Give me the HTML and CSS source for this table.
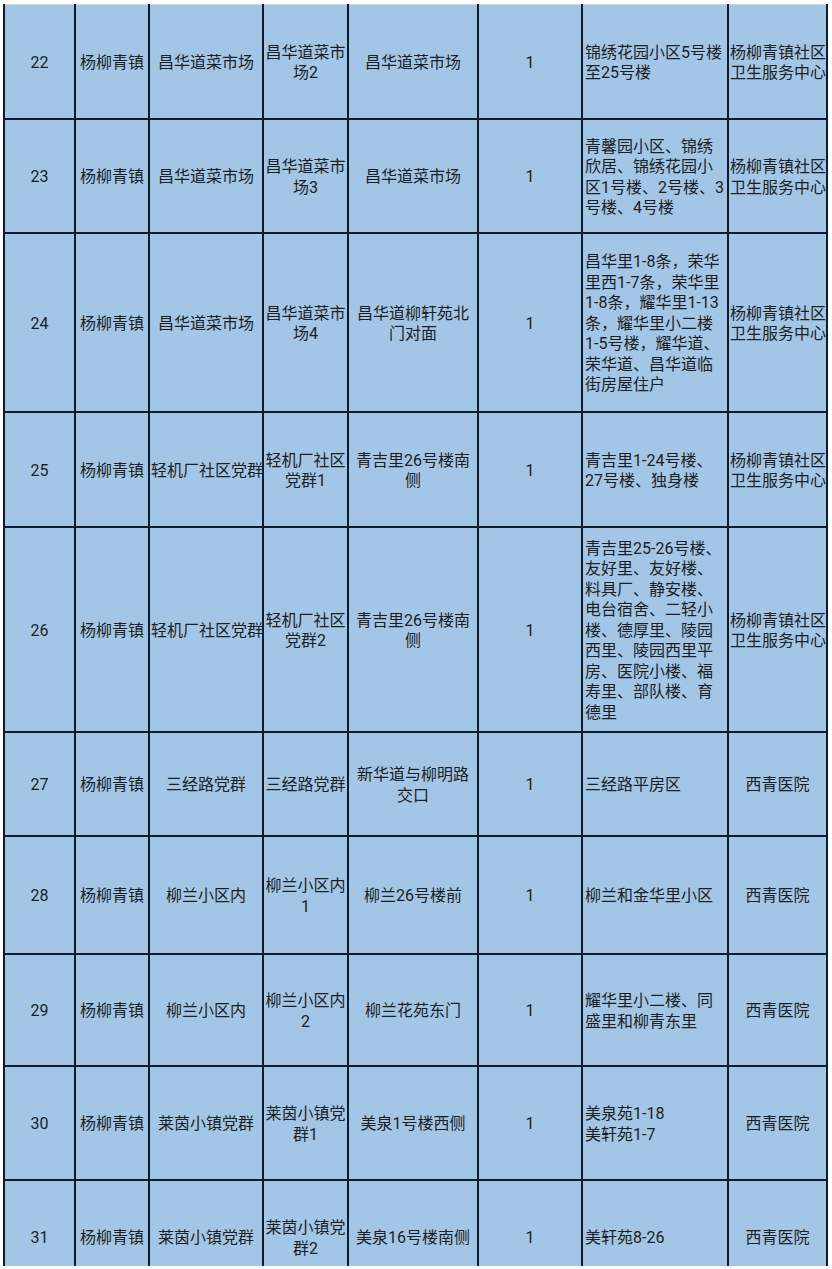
FILE: index.html
```html
<!DOCTYPE html>
<html lang="zh-CN">
<head>
<meta charset="utf-8">
<title>核酸采样点</title>
<link rel="stylesheet" href="styles.css">
</head>
<body>
<div class="sheet">
<table class="grid">
<colgroup>
<col class="c1"><col class="c2"><col class="c3"><col class="c4"><col class="c5"><col class="c6"><col class="c7"><col class="c8">
</colgroup>
<tbody>
<tr class="h114 first">
<td>22</td><td>杨柳青镇</td><td>昌华道菜市场</td><td>昌华道菜市<br>场2</td><td>昌华道菜市场</td><td>1</td><td class="addr">锦绣花园小区5号楼<br>至25号楼</td><td>杨柳青镇社区<br>卫生服务中心</td>
</tr>
<tr class="h114">
<td>23</td><td>杨柳青镇</td><td>昌华道菜市场</td><td>昌华道菜市<br>场3</td><td>昌华道菜市场</td><td>1</td><td class="addr">青馨园小区、锦绣<br>欣居、锦绣花园小<br>区1号楼、2号楼、3<br>号楼、4号楼</td><td>杨柳青镇社区<br>卫生服务中心</td>
</tr>
<tr class="h179">
<td>24</td><td>杨柳青镇</td><td>昌华道菜市场</td><td>昌华道菜市<br>场4</td><td>昌华道柳轩苑北<br>门对面</td><td>1</td><td class="addr">昌华里1-8条，荣华<br>里西1-7条，荣华里<br>1-8条，耀华里1-13<br>条，耀华里小二楼<br>1-5号楼，耀华道、<br>荣华道、昌华道临<br>街房屋住户</td><td>杨柳青镇社区<br>卫生服务中心</td>
</tr>
<tr class="h115">
<td>25</td><td>杨柳青镇</td><td>轻机厂社区党群</td><td>轻机厂社区<br>党群1</td><td>青吉里26号楼南<br>侧</td><td>1</td><td class="addr">青吉里1-24号楼、<br>27号楼、独身楼</td><td>杨柳青镇社区<br>卫生服务中心</td>
</tr>
<tr class="h205">
<td>26</td><td>杨柳青镇</td><td>轻机厂社区党群</td><td>轻机厂社区<br>党群2</td><td>青吉里26号楼南<br>侧</td><td>1</td><td class="addr">青吉里25-26号楼、<br>友好里、友好楼、<br>料具厂、静安楼、<br>电台宿舍、二轻小<br>楼、德厚里、陵园<br>西里、陵园西里平<br>房、医院小楼、福<br>寿里、部队楼、育<br>德里</td><td>杨柳青镇社区<br>卫生服务中心</td>
</tr>
<tr class="h104">
<td>27</td><td>杨柳青镇</td><td>三经路党群</td><td>三经路党群</td><td>新华道与柳明路<br>交口</td><td>1</td><td class="addr">三经路平房区</td><td>西青医院</td>
</tr>
<tr class="h118">
<td>28</td><td>杨柳青镇</td><td>柳兰小区内</td><td>柳兰小区内<br>1</td><td>柳兰26号楼前</td><td>1</td><td class="addr">柳兰和金华里小区</td><td>西青医院</td>
</tr>
<tr class="h112">
<td>29</td><td>杨柳青镇</td><td>柳兰小区内</td><td>柳兰小区内<br>2</td><td>柳兰花苑东门</td><td>1</td><td class="addr">耀华里小二楼、同<br>盛里和柳青东里</td><td>西青医院</td>
</tr>
<tr class="h114">
<td>30</td><td>杨柳青镇</td><td>莱茵小镇党群</td><td>莱茵小镇党<br>群1</td><td>美泉1号楼西侧</td><td>1</td><td class="addr">美泉苑1-18<br>美轩苑1-7</td><td>西青医院</td>
</tr>
<tr class="h114">
<td>31</td><td>杨柳青镇</td><td>莱茵小镇党群</td><td>莱茵小镇党<br>群2</td><td>美泉16号楼南侧</td><td>1</td><td class="addr">美轩苑8-26</td><td>西青医院</td>
</tr>
</tbody>
</table>
</div>
</body>
</html>
```
FILE: styles.css
```css
html, body {
  margin: 0;
  padding: 0;
  background: #ffffff;
}

.sheet {
  width: 832px;
  height: 1266px;
  overflow: hidden;
  padding: 4px 0 0 3px;
  box-sizing: border-box;
}

.grid {
  border-collapse: collapse;
  table-layout: fixed;
  width: 825px;
  font-family: Roboto, "Noto Sans CJK SC", sans-serif;
  font-size: 16px;
  font-weight: 400;
  line-height: 20.5px;
  color: #1c1f24;
}

.grid td {
  background: #a3c6e6;
  border: 2px solid #0e1c30;
  padding: 4px 1px 0;
  text-align: center;
  vertical-align: middle;
  white-space: nowrap;
}

.grid td.addr {
  text-align: left;
  padding-left: 2px;
}

.grid tr.first td {
  border-top: 1px solid #c9d7e4;
}

.c1 { width: 71px; }
.c2 { width: 74px; }
.c3 { width: 114px; }
.c4 { width: 85px; }
.c5 { width: 130px; }
.c6 { width: 104px; }
.c7 { width: 146px; }
.c8 { width: 99px; }

.h104 { height: 104px; }
.h112 { height: 112px; }
.h114 { height: 114px; }
.h115 { height: 115px; }
.h118 { height: 118px; }
.h179 { height: 179px; }
.h205 { height: 205px; }
```
